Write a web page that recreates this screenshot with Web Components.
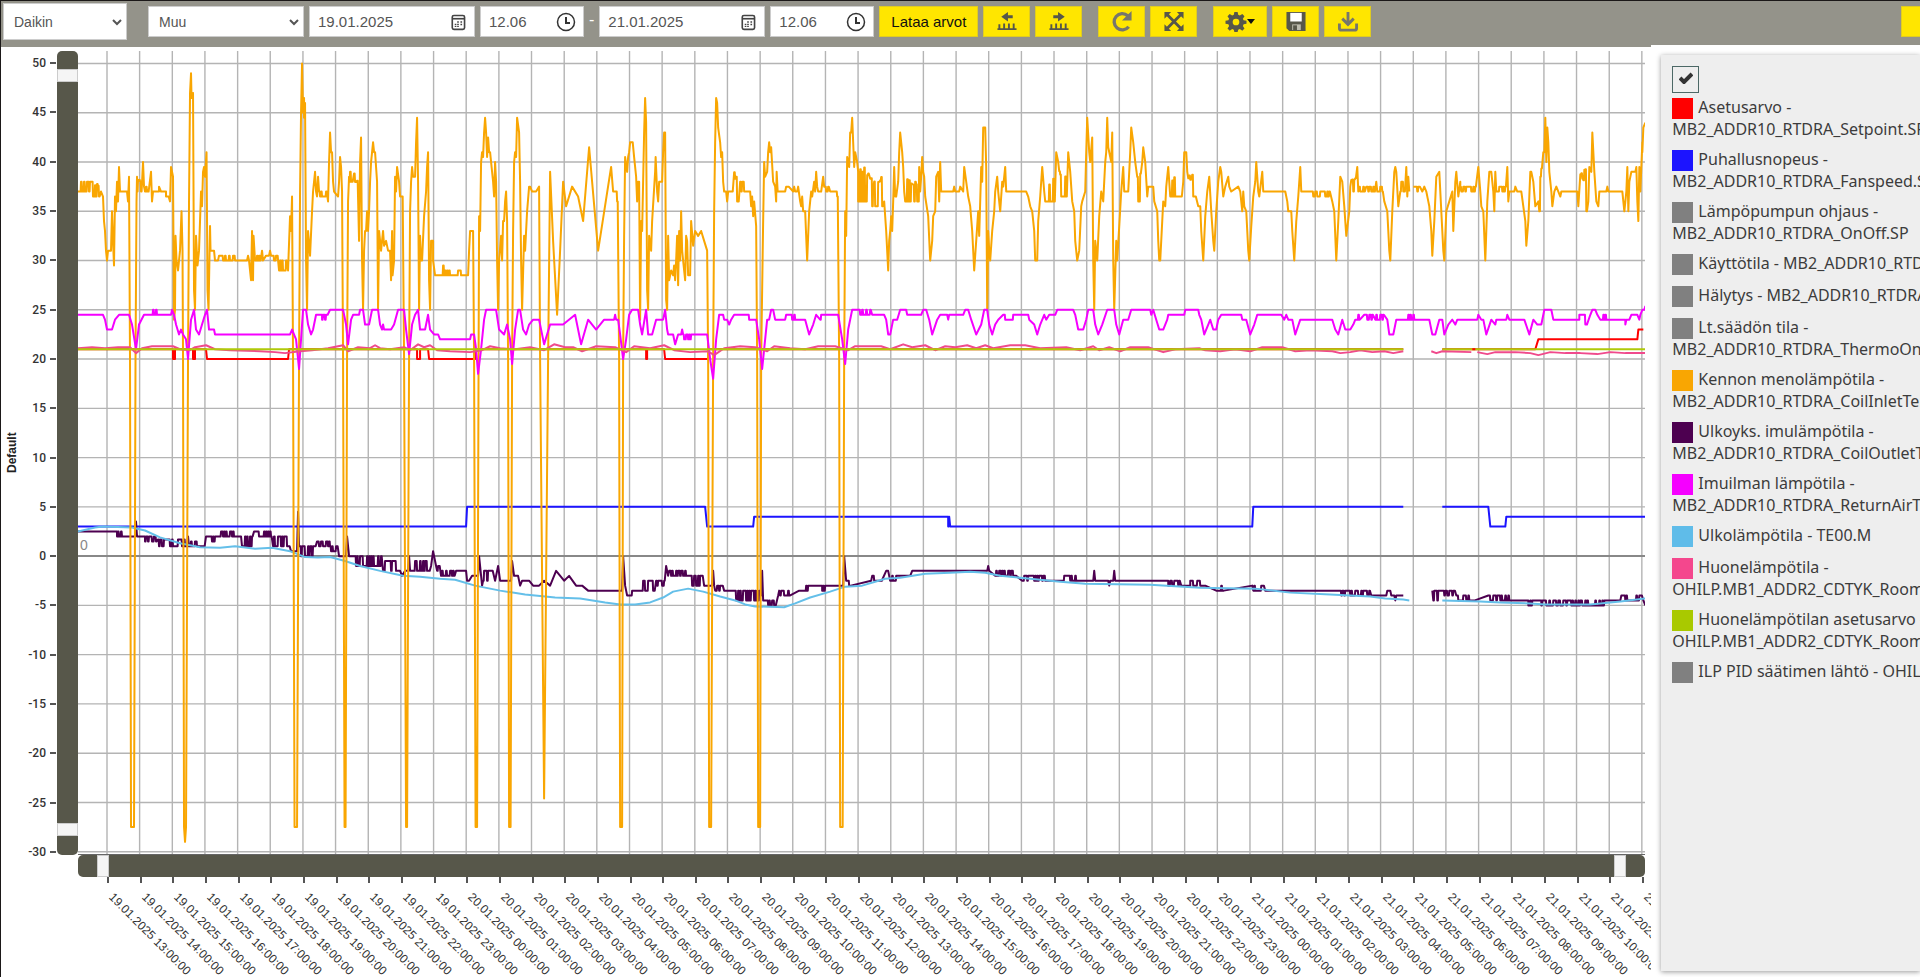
<!DOCTYPE html>
<html lang="fi">
<head>
<meta charset="utf-8">
<title>Trendi</title>
<style>
    html, body { margin: 0; height: 100%; overflow: hidden; }
    body {
        font-family: "Liberation Sans", Arial, sans-serif;
        color: #333;
        background: #fff;
        --bar: #94938a;
        --track: #57574a;
        --accent: #ffe600;
        --icon: #57574a;
    }
</style>
</head>
<body>
<trend-app></trend-app>

<script>
class BaseElement extends HTMLElement {
    constructor() {
        super();
        this.attachShadow({ mode: 'open' });
    }

    connectedCallback() {
        const template = document.createElement('template');
        template.innerHTML = this.html();
        this.shadowRoot.innerHTML = '';
        this.shadowRoot.appendChild(template.content);
    }
}

const icons = {
    prev: '<path d="M5 6l7-5v3.400h5v3.200h-5V11z"/><path d="M1 18h20v2H1zM2 14h2v4H2zM7 13h2v5H7zM12 13h2v5h-2zM17 13h2v5h-2z"/>',
    next: '<path d="M17 6l-7-5v3.400H5v3.200h5V11z"/><path d="M1 18h20v2H1zM2 14h2v4H2zM7 13h2v5H7zM12 13h2v5h-2zM17 13h2v5h-2z"/>',
    reload: '<path d="M18 16.500A8.500 8.500 0 1 1 17 5" fill="none" stroke="#77766c" stroke-width="3.500"/><path d="M21 0v10H11z" fill="#77766c"/>',
    expand: '<path d="M4 4l14 14M18 4L4 18" stroke="#57574a" stroke-width="3"/><path d="M1 1h7L1 8zM21 1v7l-7-7zM1 21v-7l7 7zM21 21h-7l7-7z"/>',
    gear: '<path fill-rule="evenodd" d="M9.300 1h3.400l.6 3 1.700.8 2.600-1.700 2.300 2.300L18.200 8l.8 1.600 3 .6v3.200l-3 .6-.8 1.700 1.700 2.600-2.300 2.300-2.600-1.700-1.700.8-.6 2.300H9.300l-.6-2.300-1.700-.8-2.600 1.700-2.300-2.300L3.800 15.700 3 14l-3-.6v-3.200l3-.6L3.800 8 2.100 5.400l2.300-2.300L7 4.800 8.700 4zM11 8a3.500 3.500 0 1 0 0 7 3.500 3.500 0 0 0 0-7z"/>',
    save: '<path d="M1 1h20v20H4l-3-3z"/><path d="M5 2h12v9H5z" fill="#fff"/><path d="M7 14h9v6H7z" fill="#bdbcae"/><path d="M8 15h4v5H8z"/>',
    download: '<path d="M11 1v12M5 8l6 6 6-6M2 13v5q0 2 2 2h14q2 0 2-2v-5" fill="none" stroke="#77766c" stroke-width="3"/>',
    calendar: '<g fill="none" stroke="#444"><rect x="4" y="3" width="15" height="17" rx="2" stroke-width="2"/><path d="M4 7h15" stroke-width="2"/></g><path d="M10 10h2v2h-2zM14 10h2v2h-2zM7 13h2v2H7zM10 13h2v2h-2zM14 13h2v2h-2zM7 16h2v1H7zM10 16h2v1h-2z" fill="#444"/>',
    clock: '<circle cx="11" cy="11" r="8.500" fill="none" stroke="#333" stroke-width="1.500"/><path d="M11 6v6h4" fill="none" stroke="#333" stroke-width="2"/>'
};

class ToolSelect extends BaseElement {
    html() {
        return `
            <style>
                :host { display: block; width: 156px; height: 31px; }
                :host([tall]) { width: 124px; height: 37px; }
                .box { display: grid; height: 100%; align-items: center; background: #fff; border: 1px solid #ccc; box-sizing: border-box; }
                select, svg { grid-area: 1 / 1; }
                select {
                    appearance: none; border: 0; background: none; width: 100%; height: 100%;
                    padding: 0 22px 0 10px; font: 14px "Liberation Sans", Arial, sans-serif; color: #555;
                }
                svg { justify-self: end; margin-right: 4px; pointer-events: none; }
            </style>
            <div class="box">
                <select aria-label="${this.getAttribute('label')}"><option>${this.getAttribute('value')}</option></select>
                <svg width="10" height="8" fill="none" stroke="#555" stroke-width="2"><path d="M1 2l4 4 4-4"/></svg>
            </div>
        `;
    }
}

class ToolField extends BaseElement {
    html() {
        const icon = this.getAttribute('icon');
        return `
            <style>
                :host { display: block; width: ${icon === 'clock' ? 104 : 166}px; height: 31px; }
                .box { display: flex; height: 100%; align-items: center; background: #fff; border: 1px solid #ccc; box-sizing: border-box; }
                input {
                    flex: 1; min-width: 0; border: 0; background: none; padding: 0 0 0 8px;
                    font: 15px "Liberation Sans", Arial, sans-serif; color: #555;
                }
                button { border: 0; background: none; padding: 0; margin-right: 6px; display: flex; }
            </style>
            <div class="box">
                <input type="text" aria-label="${this.getAttribute('label')}" value="${this.getAttribute('value')}">
                <button aria-label="Valitse"><svg width="${icon === 'clock' ? 22 : 20}" height="${icon === 'clock' ? 22 : 18}" viewBox="0 0 22 22">${icons[icon]}</svg></button>
            </div>
        `;
    }
}

class ToolButton extends BaseElement {
    html() {
        const icon = this.getAttribute('icon');
        const caret = this.hasAttribute('caret') ? '<svg width="8" height="5"><path d="M0 0h8l-4 5z" fill="#111"/></svg>' : '';
        return `
            <style>
                :host { display: block; height: 31px; }
                button {
                    display: flex; align-items: center; justify-content: center;
                    min-width: 47px; height: 100%; padding: 0 11px; box-sizing: border-box;
                    border: 1px solid #e0cc20; background: var(--accent); color: #111;
                    font: 15px "Liberation Sans", Arial, sans-serif; white-space: nowrap;
                }
                svg { fill: var(--icon); flex: none; }
            </style>
            <button ${icon ? `aria-label="${icon}"` : ''}>
                ${icon && icons[icon] ? `<svg width="22" height="21" viewBox="0 0 22 22">${icons[icon]}</svg>` : ''}${caret}<slot></slot>
            </button>
        `;
    }
}

class ToolBar extends BaseElement {
    html() {
        return `
            <style>
                :host { display: flex; align-items: flex-start; gap: 5px; height: 44px; padding: 5px 0 0 2px; box-sizing: border-box; background: var(--bar); }
                tool-select[tall] { margin: -3px 16px 0 0; }
                .dash { color: #fff; line-height: 28px; font-size: 16px; }
                .gap { margin-left: 11px; }
                .spacer { flex: 1; }
                .last { width: 19px; overflow: hidden; flex: none; }
            </style>
            <tool-select tall label="Kohde" value="Daikin"></tool-select>
            <tool-select label="Aikaväli" value="Muu"></tool-select>
            <tool-field icon="calendar" label="Alkupäivä" value="19.01.2025"></tool-field>
            <tool-field icon="clock" label="Alkuaika" value="12.06"></tool-field>
            <span class="dash">-</span>
            <tool-field icon="calendar" label="Loppupäivä" value="21.01.2025"></tool-field>
            <tool-field icon="clock" label="Loppuaika" value="12.06"></tool-field>
            <tool-button>Lataa arvot</tool-button>
            <tool-button icon="prev"></tool-button>
            <tool-button icon="next"></tool-button>
            <tool-button class="gap" icon="reload"></tool-button>
            <tool-button icon="expand"></tool-button>
            <tool-button class="gap" icon="gear" caret></tool-button>
            <tool-button icon="save"></tool-button>
            <tool-button icon="download"></tool-button>
            <div class="spacer"></div>
            <tool-button class="last" icon="menu"></tool-button>
        `;
    }
}

// Series notation: "x,value" is a point, "a~b:lo/hi" is a stretch that
// flickers between two values, "|" is a break in the line.
const series = [
    { color: '#1c14ff', data: '78,3 466,3 467,5 705,5 707,3 753,3 754,4 948,4 948,3 949,4 950,3 1252,3 1253,5 1403,5 | 1442,5 1488,5 1490,3 1505,3 1506,4 1645,4' },
    { color: '#4d0050', data: `78,2.5 117,2.5 117~123:2/2.5 124,2 135,2 136,3.5 137,2 145,2 145~157:1.5/2 158~186:1/1.7 187,1 188,2 189~205:1/1.5
        206,2 210,2 211~218:1.5/2 219~235:2/2.5 236,2 241,2 242~253:1/2 254~272:2/2.5 273~290:1/2 291,.5 297,.5 298,4.5 299,1 300~316:0/1
        317~330:1/1.5 330~338:.5/1 339,0 346,0 347,2 349,0 352,0 353~382:-1/0 383~397:-1.5/-.5 400,-1.5 402,-2 405,-1.5 408,-1.5 409,0
        410~430:-1.5/-.5 431,-1 433,.5 436,-1 437~440:-1.5/-1 441~455:-2/-1.5 456~462:-1.5/-1 466,-1.5 467,-2.5 469,-2.5 472,-2 478,-2 479,0
        481,-2 482,-3 483~493:-2.5/-1.5 495,-2.5 498,-1 500,-2.5 511,-2.5 512,-.5 514,-2 518,-2 520,-3 522,-2.5 529,-2.5 533,-3 539,-3
        544,-2.5 550,-3 556,-1.5 564,-2.5 569,-2 576,-3 582,-3 588,-3.5 622,-3.5 623,0 625,-3 627,-4 628~640:-4/-3.5 641~655:-3.5/-2.5
        656~665:-3/-2.5 666,-1 668,-2 669~690:-2/-1.5 690~703:-3/-2 704,-3 712,-3 713,-1.5 714,-3 715~723:-3.5/-3 724,-3.5 733,-3.5
        734~760:-4.5/-3.5 761,-4 762,-1.5 763,-4.5 764~776:-5/-4.5 778,-4 779,-3.5 780~790:-4/-3.5 799,-3.5 800~810:-3.5/-3 811,-3 822,-3
        822~830:-3.5/-3 843,-3 844,0 846,-2.5 847~851:-3/-2.5 871,-2.5 872~882:-2.5/-2 886,-1.5 888,-1.5 890~898:-2.5/-2 910,-2 912,-1.5
        987,-1.5 988,-1 989,-1.5 995~1015:-2/-1.5 1016,-2 1022~1047:-2.5/-2 1050,-2.5 1062~1078:-2.5/-2 1080,-2.5 1093,-2.5 1094,-1.5
        1095,-2.5 1108,-2.5 1109,-3 1110,-2.5 1113,-2.5 1114,-1.5 1115,-2.5 1168,-2.5 1168~1180:-3/-2.5 1181,-3 1190,-3 1190~1204:-3/-2.5
        1205,-3 1216~1224:-3.5/-3 1252,-3 1253~1264:-3.5/-3 1265,-3.5 1340,-3.5 1340~1370:-4/-3.5 1371,-4 1386,-4 1387,-3.5 1390,-3.5
        1391,-4 1394,-4 1395,-4.5 1396,-4 1403,-4 | 1432,-3.5 1433~1440:-4.5/-3.5 1441~1455:-4/-3.5 1456~1475:-4.5/-4 1488,-4
        1489~1510:-4.5/-4 1511,-4.5 1528,-4.5 1528~1534:-5/-4.5 1541,-4.5 1541~1592:-5/-4.5 1593~1606:-5/-4.5 1620,-4.5 1621~1642:-4.5/-4 1643,-4.5 1645,-5` },
    { color: '#64bfe9', data: `78,2.5 95,2.9 103,3 132,2.9 145,2.6 160,1.9 180,1.3 200,.9 220,.85 235,1 255,.75 272,.85 290,.5 305,-.1 318,-.15
        330,-.1 345,-.5 360,-1 380,-1.5 403,-2 420,-2.1 440,-2.3 455,-2.4 475,-3 500,-3.5 525,-3.9 555,-4.2 580,-4.3 605,-4.7 620,-4.9
        635,-4.9 650,-4.7 663,-4.2 673,-3.6 688,-3.3 703,-3.6 720,-4.1 735,-4.5 745,-4.9 755,-5.1 784,-5.2 795,-4.8 810,-4.2 830,-3.6
        845,-3.1 862,-3 875,-2.6 885,-2.3 900,-2.2 925,-1.8 950,-1.7 970,-1.6 985,-1.7 1000,-2 1030,-2.3 1060,-2.6 1085,-2.8 1150,-2.9
        1200,-3.2 1255,-3.3 1290,-3.7 1330,-3.9 1370,-4.1 1385,-4.3 1403,-4.4 1409,-4.5 | 1442,-4.5 1480,-4.6 1500,-4.7 1530,-4.8
        1545,-4.9 1590,-4.9 1620,-4.6 1645,-4.3` },
    { color: '#ff0000', data: `78,21 173,21 173,20 175,20 175,21 193,21 193,20 195,20 195,21 206,21 207,20 288,20 289,21 417,21 417,20 420,20 420,21
        428,21 429,20 475,20 476,21 646,21 646,20 647,20 647,21 664,21 665,20 708,20 709,21 1403,21 | 1442,21 1535,21 1538,22 1637,22 1638,23 1643,23` },
    { color: '#f9a602', data: `78,37 80~93:37/38 93~100:36.5/38 101,37 103,36.5 104,34 105,33 106,31 107,30 108,31 111,31 112,35 113,32 114,29.5
        115,36.5 116,35 117,38 118,36 119,39.5 120,37 127,37 128,36 129,38.5 130,20 131,-27.5 134,-27.5 135.500,20 136.500,36 137,38.5
        137~142:37/38.5 143,40 144,37.5 145~149:37/37.5 151,39 152,36 153,37 159,37 159,37.5 161,37 166,37 166~169:36.5/37 170,36 171,39.5
        173,38.5 174,24 175,25 175.500,32.5 176.500,30 178,29 180,31 181.500,35 182.500,31 183,20 184,-27.5 185,-29 186,-27.5 188,20
        189,36 190,47 191,49 191.500,46.5 193,47 194,27 195,25 196,32.5 197.500,29.5 199,31 201,37 202,35.5 203,39 204,39.5 205,38.5
        206.500,41 207.500,27 208.500,25 210,33.5 210.500,31 214,31 215,30 218,30 219~242:30/30.5 247,30 248,30.5 249,30 251,28 252,33 253,28
        253.500,32.5 255,30 256~261:30/30.5 262,31 263,30 266,30.5 269,30.5 270,31 271~278:30/30.5 279~287:29/30 288,29 290,34.5 291,33
        292,36.5 293,20 294.500,-27.5 297,-27.5 299,20 300,37 301,45 302,50 303,45 304,46.5 304,44.5 305,46 306,30 307,25 308,33 310,30.5
        312,35 313,37 315,39 316,37 317,36.5 318,38.5 319,37 319~327:36.5/37 328,36 329,40 330,43 331,41 332,41 333,38 334,37 338,36.5 339,38
        340,40.5 341,39.5 342,37 343,20 344.500,-27.5 345.500,-27.5 347,20 348,36 349,38.5 349~353:38/39 354~358:35.5/39 359,32 360,40
        361,42.5 362,30 363,25 364,31 365,33 366,33 367,35 368,33 369,35 370,38 371,40 373,42 374,41 375,41 377,38 378,25 379,33 381,31
        383,33 384,31.5 386,32 388,31 390,31 391,28 392,33 392.500,28.5 394,30 395,38.5 396,37 397,39.5 399,38 400,36.5 401~403:36.5/37.5
        404,20 406,-27.5 407,-27.5 409,20 410,35 411,38 412,39.5 413,38.5 415,38.5 416,42 417,44.5 418,38 419,25 420,32.5 421,30 422,30
        424,34.5 426,37 427,39.5 428,41 429,28 430,25 431,32 433,32 433,30 435,28.5 439,28.5 440~444:28.5/29.5 444~452:28.5/29
        453~456:28.5/28.5 457~462:28.5/29 463,28.5 468,28.5 469,31 470,33 473,33 474,20 475.500,-27.5 477,-27.5 478.500,20 479,34.5 480,33
        481,40 482,41 483,40.5 484,43 485,44.5 486,43 487,40.5 488,42.5 489,41 490,41 491,40 493,38 494,36.5 495,40 496,38 497,30 498,25
        499,30 501,32.5 502,30 503,34 504,34 505,36 506,37 507,34 508,20 509,-27.5 510.500,-27.5 512,20 513,33 514,40 515,41 516,40.5
        517,44.5 519,43 520,38 521,30 522,25 524,32.5 525,31 527,35 529,37.5 530,37.5 532,37 536,37 539,37.5 540,20 544,-24.6 548,20 550,39
        553,32 557,24.5 560,31 563,38 566,35.5 572,37.5 578,36.5 583,34 589,41.5 598,31 611,39.5 613,37 615,37 616~618:36/37 619,20
        620,-27.5 622,-27.5 623,20 624,32.5 625,40.5 627,39 628,40.5 629,41 630~633:41/42 634,40.5 636,38.5 637,36 638,38 639,38 640,24
        641,34 642,33 644,43 645,46.5 646,44 647,27 648,25 649,32.5 651,31 652,34 655,39 655.500,40.5 657,37 658,36 659,38 662,38 663,41
        664,43 665,43 666,26 667,25 668,32.5 669,28 671,29 673,28.5 674,29.5 675,28 676,30 677,32.5 678,27.5 679,33 680,30 681,35
        682,31 683,30 685,28 686,32.5 687,32 688,28.5 690,28.5 691,34 693,31.5 695,33 698,32.5 701,33 704,32 707,31 708,20 709,-27.5
        711,-27.5 713,20 714,35 715,42 716,46.5 717,46 718,43.5 720,42 721,40.5 722,41 723,38 724,37 726,37 727,36 728,37 730~733:37/38
        734~739:36/39 740~745:37/38 746,37 750,37 751,35.5 752,36.5 753,34.5 754,36 756,33.5 757,20 758,-27.5 760,-27.5 761,20 763,34
        764,40 765,38.5 767,39 768,41 769,42 770,41 771,41.5 773,38 775,37.5 776,36 776.500,39 777.500,37 785,37 786~789:37/37.5 793,37
        794,37.5 795,37 797,37 798,37.5 800,36 801,35.5 802,36.5 803,35 805,35 807,30 809,35 811,37 812,36.5 814,38 815,37 816,39
        817,37.5 818,37 821,37 823,38.5 824~829:37/37.5 830,37 835,37 836~838:36.5/37 839,20 840,-27.5 842.500,-27.5 844,20 845,35 846,32.5
        847,40.5 849,39.5 850,43 851,43 852,44.5 853,42 854,39.5 855,41 857,40 858,39 858~869:36/40 870~883:35.5/38.5 884,36 885,34.5
        886,33 887,31 888,29 889,32 890,33 891,34.5 892,33 893,36 894,39.5 895,36.5 896,36.5 898,38 899,41 900,43 901,42 902,41 903,39.5
        904,37 905~919:36/38.5 919,39.5 920,37 921,38.5 922,40.5 923,39 924,38.5 925,36.5 928,34.5 930,30 932,32 933,34.5 935,35 936,38.5
        938,39 939,36 940,40 941,37 953,37 954,37.5 955,37 959,37 960,37.5 963,37 964,39.5 966,38 968,36.5 970,35.5 972,33 974,29 976,32
        977,33.5 978,35 979,32.5 980,36 981,39.5 982,38 983,43.5 985,43.5 986,39.5 987,25 988,33 989,31 990,30 992,33 994,35 995,37 997,38.5
        998,37 1000,35 1002,38 1003,37.5 1005,39.5 1006,37 1026,37 1028,36.5 1030,35.5 1032,35 1034,33 1035,30 1037,30 1038,34 1040,36.5
        1042,39.5 1044,37 1045~1055:36/38.5 1056,41 1058,40 1059~1067:36.5/39.5 1068,41 1070,39 1072,36 1074,35 1075,32 1077,30 1079,31
        1081,35.5 1082,36 1085,37 1086,41 1087,44.5 1089,41 1090,40 1092,42.5 1093,30 1094,25 1095,32 1097,30 1099,34.5 1101,37 1103,36
        1105,40 1106,41 1107,44.5 1108,41.5 1110,40.5 1111,40 1112,43 1113,30 1114,25 1116,32 1117,30 1119,33.5 1121,37 1123,39.5 1124,37
        1128,37 1130,41 1131,43.5 1133,42 1135,40 1137~1141:36/39 1142,40 1143,41.5 1145,40 1147,36.5 1148,37.5 1153,37.5 1154,36 1157,35
        1158,32 1159,30 1160,30 1162,34 1163,36 1165,35.5 1166,37.5 1168,39.5 1170~1182:36.5/38.5 1183,38 1184,41 1186,41 1187,39
        1188~1196:36.5/39 1198,35.5 1200,35.5 1201,33 1203,30 1205,34.5 1207,37 1209,38.5 1211,35 1213,32 1214,31 1216,35 1218,38 1220,39.5
        1221,39 1223,36.5 1225,37.5 1228,38.5 1229,37.5 1231,37 1238,37.5 1240,37 1242,35 1243,37 1244,35.5 1246,35 1248,31 1249,30 1251,33.5
        1253,36.5 1255,38 1256,40 1258,37 1259,36.5 1262,39 1263,37 1285,37 1287,36 1288,35 1291,35 1292,33 1294,30 1296,34 1298,36.5
        1299,38 1300,39.5 1301,37 1302~1307:36.5/37 1308,37 1310~1330:36.5/37 1332,36 1334,35 1336,30 1338,34 1340,38.5 1342,38 1344,35.5
        1346,32.5 1349,35 1350,37.5 1351~1356:37/38.5 1357,39.5 1358,37 1359~1365:37/37.5 1366~1375:37/37.5 1376,38 1377~1383:37/37.5
        1384,36 1387,35 1389,31 1390,30 1392,35 1394,39 1395,39.5 1396,39 1398,35.5 1400~1405:37/38 1406,39.5 1407,36.5 1408,38.5 1409,37 |
        1413,37.5 1415,37.5 1416~1420:37/37.5 1422,37 1424,37.5 1426,37 1428,36 1429,35.5 1431,33 1432,30.5 1434,34 1436,38.5 1439,39 1441,35
        1443,31 1444,30 1446,35 1449,36 1452,37 1453,33 1455,38 1456,39 1458,36.5 1460,38 1460~1476:37/37.5 1478,39.5 1480,37 1481,35.5
        1483,35 1485,30 1487,36 1489,39 1491,39 1493,37 1494,35 1495,39 1496,37 1497~1506:37/37.5 1507,39.5 1508,36 1509,37 1514,37
        1515,37.5 1517,37 1521,37 1523,35.5 1525,34 1526,31.5 1528,34 1530,39 1531,39 1533,38 1535,35.5 1538,36 1539~1542:35/39.5 1543,41
        1544,41 1545,44.5 1546,40 1547,43.5 1548,42 1549,39 1551,37 1552,35.5 1554,37 1556,37.5 1558,37 1560,36.5 1561,37 1577,37 1578,35.5
        1580~1587:35/39.5 1588,36 1589,39.5 1591,39 1592,43 1593,41 1594,39 1596,36 1598,35.5 1599,37 1606,37 1607,37.5 1608,37 1622,37
        1624,35 1626,37 1627,39.5 1628,35 1629,38 1631,39 1635,39 1636,39.5 1637,36 1638,34 1639,39.5 1640,37 1641,39.5 1642,42 1642,41
        1643,43.5 1645,44` },
    { color: '#f500ff', data: `78,24.5 103,24.5 105,24 107,23 112,23 115,24 119,24.5 129,24.5 132,23.5 136,21 139,23.5 144,24.5 152,24.5 152~158:24.5/25
        159,24.5 171,24.5 172,25 174,24.5 176,23.5 179,22.5 181,23 183,22.5 186,22 188,20 191,24 194,25 196,23 199,22.5 202,23.5 205,24.5
        207,25 209,23 214,23 215,22.5 290,22.5 292,23 296,22 299,19 301,22 303,25 306,25 308,23.5 311,22.5 313,23 316,24.5 322,24.5
        322~328:24/24.5 330,25 343,25 346,23.5 348,21.5 351,24 353,24.5 359,24.5 360,25 363,25 365,23.5 369,23.5 372,25 378,25 380,23.5
        382,23 383,23.5 384,23 391,23 394,23.5 398,25 404,25 406,23 409,20.5 412,23.5 415,24.5 418,25 420,23 425,23 428,24.5 430,23 434,22.5
        438,22.5 440,22 470,22 471,22.5 474,22.5 476,21 478,18.5 481,21 484,24 486,25 496,25 499,23 504,22.5 507,23.5 510,22 512,19.5
        515,23 518,25 520,25 523,23 526,22.5 529,23.5 533,24 539,24 544,21.5 550,23.5 563,23.5 575,24.5 581,21.5 588,24 596,23 604,24
        614,24 615,24.5 616,24 618,24 620,22.5 623,20 626,22 629,24.5 632,25 638,25 640,23.5 642,22.5 646,25 648,22.5 652,22.5 656,24
        663,24 665,25 667,23 668,22.5 673,22.5 675,21.5 678,22.5 681,22.5 682,23 683~692:22/22.5 693,22.5 707,22.5 710,20 713,18 716,22 719,24.5
        723,24.5 724,24 727,24 729,23.5 731,24 734,24.5 747,24.5 748~751:24/24.5 752,24 756,24 759,22 762,19 765,22 767,24 769,24 771,25
        773,25 775,24 785,24 786~799:24/24.5 801,24 805,24 809,22.5 813,23.5 816,24.5 820~823:24/24.5 825,24.5 838,24.5 842,22 845,19.5
        848,23 852,25 858~871:24.5/25 872,24.5 884,24.5 886,24 888,22.5 890,22.5 893,24 897,24 900,25 906,25 907,24.5 921,24.5 923,25
        926,25 929,24 932,22.5 937,24 940,24.5 947,24.5 948,24 949,24.5 963,24.5 965,25 968,25 971,24 976,22.5 981,23.5 984,25 987,25 989,23.5
        992,22.5 995,23.5 998,24 1003,24.5 1004~1014:24/24.5 1015,24.5 1028,24.5 1029,24 1034,23.5 1037,22.5 1040,23.5 1044,24.5 1046,24
        1049,24.5 1055,24.5 1057,25 1073,25 1075,24.5 1078,23 1083,23 1086,24 1088,25 1093,25 1095,23.5 1098,22.5 1102,23.5 1107,25
        1114,25 1116,23.5 1119,22.5 1123,24 1128,24 1131,25 1150,25 1151,24.5 1153,25 1156,24 1159,23 1163,23 1167,24 1168,24.5 1184,24.5
        1185,25 1198,25 1199,24.5 1201,24 1204,22.5 1208,23.5 1210,24 1213,23 1216,23 1218,24 1221,24.5 1241,24.5 1242,24 1246,24 1250,22.5
        1254,23.5 1257,24.5 1281,24.5 1284,24 1286,24.5 1288,24 1292,24 1295,22.5 1300,24 1332,24 1335,23 1338,22.5 1342,24 1345,23
        1350,23 1353,23.5 1355,24 1357~1360:24/24.5 1364~1373:24/24.5 1375~1384:24/24.5 1387,24 1389,22.5 1393,22.5 1396,24 1404,24
        1404~1415:24/24.5 1416,24 1429,24 1432,22.5 1435,22.5 1439,24 1442,24 1444,22.5 1448,23.5 1452,24 1455,23.5 1457,24 1477,24
        1478,24.5 1481,24 1483,24 1486,22.5 1491,24 1495,23.5 1496,24 1506,24 1507,24.5 1509,24 1524,24 1529,22.5 1533,24 1537,23.5
        1541,23.5 1544,25 1551,25 1553,24 1579,24 1579~1587:23.5/24.5 1590,24.5 1592,25 1595,25 1597,24.5 1600~1607:24/24.5 1608,24 1625,24
        1625,23.5 1626,24 1629,24 1631,24.5 1637,24.5 1639,24 1640,24.5 1642,25 1644,25 1645,25.4` },
    { color: '#f04a8c', data: `78,21.1 92,21.2 105,21.1 118,21.2 130,21.2 136,20.6 142,21.1 152,21.3 165,21.3 173,21.3 180,21 190,20.9 195,21.2
        206,21.4 215,21 230,20.9 260,20.8 275,20.7 285,20.6 300,20.8 312,20.9 328,21.1 343,21.4 348,20.8 358,21.2 370,21.1 375,21.4
        380,21.1 390,21 404,21.2 410,20.9 418,21.5 424,21.2 430,21.4 437,20.9 450,20.8 470,20.7 482,20.9 490,21.3 500,21.1 515,21 530,21.2
        544,20.9 554,21.5 565,21.2 573,21.2 582,20.8 596,21.3 615,21.2 626,20.7 634,21.3 642,21.2 650,21.1 664,21.4 674,20.9 690,20.7
        708,20.8 714,20.4 724,21.1 740,21.3 755,21.2 767,20.8 774,21.3 790,21.1 805,21 818,21.3 835,21.3 848,20.9 855,21.3 881,21.3
        890,21 903,21.5 912,21.2 925,21.4 935,20.9 945,21.3 955,21.2 967,21.4 976,21.1 985,21.4 993,21.1 1010,21.4 1025,21.4 1040,21.1
        1066,21.2 1080,20.9 1093,21.3 1099,20.9 1109,21.2 1120,20.8 1130,21.2 1148,21.2 1163,20.7 1175,21 1199,21.1 1205,20.9 1220,20.8
        1235,21 1250,20.8 1262,21.2 1282,21.2 1295,20.8 1310,20.9 1332,20.8 1340,20.6 1350,20.7 1360,20.9 1372,20.7 1384,20.8 1393,20.6 1403,20.8 |
        1431,20.8 1436,20.6 1442,20.8 1471,20.7 | 1477,20.7 1487,20.5 1495,20.7 1515,20.7 1530,20.6 1538,20.4 1550,20.7 1565,20.6
        1580,20.6 1597,20.5 1610,20.7 1625,20.6 1645,20.6` },
    { color: '#b0c90a', data: '78,21 1403,21 | 1442,21 1645,21' },
    { color: '#ff0000', data: '1472,21 1475,21' }
];

const X0 = 78, Y0 = 51, W = 1567, H = 804;
const scaleX = i => 107 + i * (1534.5 / 47);
const scaleY = v => 63.5 + (50 - v) * 9.865;

function linePath(data) {
    let seed = 7;
    const random = () => (seed = (seed * 16807) % 2147483647) / 2147483647;
    let d = '';
    let cmd = 'M';
    const add = (x, v) => {
        d += `${cmd}${x} ${scaleY(v).toFixed(1)}`;
        cmd = 'L';
    };
    data.trim().split(/\s+/).forEach(token => {
        if (token === '|') {
            cmd = 'M';
        } else if (token.includes('~')) {
            const [range, levels] = token.split(':');
            const [from, to] = range.split('~').map(Number);
            const [lo, hi] = levels.split('/').map(Number);
            // jump straight up or down, then hold the level for a moment
            for (let x = from; x < to; x++) {
                const v = random() < 0.55 ? lo : hi - (hi - lo > 1 ? random() * (hi - lo) / 3 : 0);
                add(x, v);
                add(x + 0.6, v);
            }
        } else {
            const [x, v] = token.split(',').map(Number);
            add(x, v);
        }
    });
    return d;
}

class RangeTrack extends BaseElement {
    html() {
        const vertical = this.hasAttribute('vertical');
        return `
            <style>
                :host { display: flex; background: var(--track); border-radius: 5px; overflow: hidden; flex-direction: ${vertical ? 'column' : 'row'}; }
                input {
                    appearance: none; background: none; margin: 0; padding: 0; flex: 1; min-width: 0; min-height: 0;
                    ${vertical ? 'writing-mode: vertical-lr; width: 21px;' : 'height: 22px;'}
                }
                input::-webkit-slider-thumb {
                    appearance: none; background: #f5f5f5; border: 1px solid #ccc; box-sizing: border-box;
                    ${vertical ? 'width: 21px; height: 13px;' : 'width: 12px; height: 22px;'}
                }
            </style>
            <input type="range" aria-label="Alaraja" step="any" value="${this.getAttribute('start')}">
            <input type="range" aria-label="Yläraja" step="any" value="${this.getAttribute('end')}">
        `;
    }
}

class TrendPlot extends BaseElement {
    html() {
        let grid = '';
        for (let i = 0; i < 48; i++) {
            grid += `M${scaleX(i).toFixed(1)} ${Y0}V${Y0 + H}`;
        }
        for (let v = -30; v <= 50; v += 5) {
            grid += `M${X0} ${scaleY(v).toFixed(1)}H${X0 + W}`;
        }
        const lines = series.map(s => `<path d="${linePath(s.data)}" stroke="${s.color}" stroke-width="2"/>`).join('');
        return `
            <style>
                :host { display: grid; min-width: 0; min-height: 0; border-bottom: 1px solid #666; }
                svg { grid-area: 1 / 1; width: 100%; height: 100%; display: block; }
                path { fill: none; vector-effect: non-scaling-stroke; stroke-linejoin: round; }
                span { grid-area: 1 / 1; align-self: end; justify-self: start; margin: 0 0 301px 2px; font-size: 14px; line-height: 16px; color: #888; }
            </style>
            <svg viewBox="${X0} ${Y0} ${W} ${H}" preserveAspectRatio="none">
                <path d="${grid}" stroke="#b4b4b4" stroke-width="1.400"/>
                <path d="M${X0} ${scaleY(0)}H${X0 + W}" stroke="#888" stroke-width="2"/>
                ${lines}
            </svg>
            <span>0</span>
        `;
    }
}

class TrendChart extends BaseElement {
    html() {
        let yLabels = '';
        for (let v = 50; v >= -30; v -= 5) {
            yLabels += `<li>${v}</li>`;
        }
        let xLabels = '';
        for (let i = 0; i < 48; i++) {
            const hour = 13 + i;
            const day = 19 + Math.floor(hour / 24);
            xLabels += `<li><span>${day}.01.2025 ${String(hour % 24).padStart(2, '0')}:00:00</span></li>`;
        }
        return `
            <style>
                :host {
                    display: grid; overflow: hidden; box-sizing: border-box; padding: 4px 6px 0 0; border-top: 2px solid var(--bar);
                    grid-template: minmax(0, 1fr) 22px 100px / 56px 21px minmax(0, 1fr);
                }
                ul { list-style: none; margin: 0; padding: 0; display: flex; justify-content: space-between; }
                .left { display: flex; align-items: stretch; }
                .title { writing-mode: vertical-rl; transform: rotate(180deg); text-align: center; font: bold 12px/16px "Liberation Sans", Arial, sans-serif; color: #222; margin-left: 3px; }
                .y { flex: 1; flex-direction: column; padding: 12px 0 3px; font: 500 12px Roboto, sans-serif; }
                .y li { height: 0; display: flex; align-items: center; justify-content: flex-end; gap: 4px; }
                .y li::after { content: ""; width: 6px; height: 2px; background: #555; margin-right: 1px; }
                .scroll { grid-column: 3; }
                .x { grid-column: 3; padding: 0 3px 0 29px; font: 12px "Liberation Sans", Arial, sans-serif; color: #333; }
                .x li { width: 0; display: flex; flex-direction: column; align-items: flex-start; }
                .x li::before { content: ""; width: 2px; height: 6px; background: #555; }
                .x span { display: block; white-space: nowrap; line-height: 14px; margin: 5px 0 0 4px; transform: rotate(45deg); transform-origin: 0 50%; }
            </style>
            <div class="left"><div class="title">Default</div><ul class="y">${yLabels}</ul></div>
            <range-track vertical start="4.600" end="95.200"></range-track>
            <trend-plot></trend-plot>
            <range-track class="scroll" start="2.500" end="97.500"></range-track>
            <ul class="x">${xLabels}</ul>
        `;
    }
}

class LegendItem extends BaseElement {
    html() {
        return `
            <style>
                :host { display: block; margin-bottom: 11px; white-space: nowrap; line-height: 20px; }
                .head { display: flex; gap: 5px; }
                i { width: 21px; height: 21px; background: ${this.getAttribute('color')}; flex: none; }
                .name { margin-top: -1px; }
            </style>
            <div class="head"><i></i><span class="name"><slot></slot></span></div>
            <slot name="tag"></slot>
        `;
    }
}

class TrendLegend extends BaseElement {
    html() {
        const items = [
            ['#ff0000', 'Asetusarvo -', 'MB2_ADDR10_RTDRA_Setpoint.SP'],
            ['#1c14ff', 'Puhallusnopeus -', 'MB2_ADDR10_RTDRA_Fanspeed.SP'],
            ['#808080', 'Lämpöpumpun ohjaus -', 'MB2_ADDR10_RTDRA_OnOff.SP'],
            ['#808080', 'Käyttötila - MB2_ADDR10_RTDRA'],
            ['#808080', 'Hälytys - MB2_ADDR10_RTDRA'],
            ['#808080', 'Lt.säädön tila -', 'MB2_ADDR10_RTDRA_ThermoOn.M'],
            ['#f9a602', 'Kennon menolämpötila -', 'MB2_ADDR10_RTDRA_CoilInletTemp'],
            ['#4d0050', 'Ulkoyks. imulämpötila -', 'MB2_ADDR10_RTDRA_CoilOutletTemp'],
            ['#f500ff', 'Imuilman lämpötila -', 'MB2_ADDR10_RTDRA_ReturnAirTemp'],
            ['#5fbce9', 'Ulkolämpötila - TE00.M'],
            ['#f4478d', 'Huonelämpötila -', 'OHILP.MB1_ADDR2_CDTYK_RoomT'],
            ['#a9c900', 'Huonelämpötilan asetusarvo -', 'OHILP.MB1_ADDR2_CDTYK_RoomT'],
            ['#808080', 'ILP PID säätimen lähtö - OHILP']
        ];
        const rows = items.map(([color, name, tag]) => `<legend-item color="${color}">${name}${tag ? `<div slot="tag">${tag}</div>` : ''}</legend-item>`).join('');
        return `
            <style>
                :host { display: flex; padding: 10px 0 6px 10px; box-sizing: border-box; overflow: hidden; }
                .panel { flex: 1; min-width: 0; background: #eee; box-shadow: 0 1px 5px rgba(0, 0, 0, .4); padding: 11px 0 0 11px; font: 16px "Noto Sans", sans-serif; color: #3c3c3c; }
                label { display: grid; width: 27px; height: 27px; margin-bottom: 5px; }
                input { grid-area: 1 / 1; appearance: none; margin: 0; border: 1px solid #4c6866; }
                svg { grid-area: 1 / 1; place-self: center; pointer-events: none; margin-bottom: 3px; }
            </style>
            <div class="panel">
                <label>
                    <input type="checkbox" checked aria-label="Valitse kaikki">
                    <svg width="14" height="12" viewBox="0 0 14 12"><path d="M1 6l4 4 8-8" fill="none" stroke="#333" stroke-width="4"/></svg>
                </label>
                ${rows}
            </div>
        `;
    }
}

class TrendApp extends BaseElement {
    html() {
        return `
            <style>
                :host { display: flex; flex-direction: column; height: 100vh; box-sizing: border-box; border-top: 1px solid #1b1818; border-left: 1px solid #1b1818; }
                main { flex: 1; min-height: 0; display: flex; }
                trend-chart { flex: 1; min-width: 0; }
                trend-legend { flex: 0 0 14%; }
            </style>
            <tool-bar></tool-bar>
            <main>
                <trend-chart></trend-chart>
                <trend-legend></trend-legend>
            </main>
        `;
    }
}

customElements.define('tool-select', ToolSelect);
customElements.define('tool-field', ToolField);
customElements.define('tool-button', ToolButton);
customElements.define('tool-bar', ToolBar);
customElements.define('range-track', RangeTrack);
customElements.define('trend-plot', TrendPlot);
customElements.define('trend-chart', TrendChart);
customElements.define('legend-item', LegendItem);
customElements.define('trend-legend', TrendLegend);
customElements.define('trend-app', TrendApp);
</script>
</body>
</html>
